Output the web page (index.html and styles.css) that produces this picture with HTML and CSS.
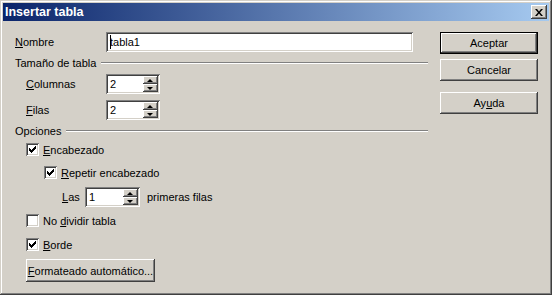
FILE: index.html
```html
<!DOCTYPE html>
<html lang="es">
<head>
    <meta charset="UTF-8">
    <title>Insertar tabla</title>
    <link rel="stylesheet" href="styles.css">
</head>
<body>
    <div class="window">
        <!-- Barra de título -->
        <div class="titlebar">
            <span class="title">Insertar tabla</span>
            <div class="close">
                <svg width="8" height="7" viewBox="0 0 8 7"><path d="M0 0h2l2 2.5L6 0h2L5 3.5 8 7H6L4 4.5 2 7H0l3-3.5z" fill="#000"/></svg>
            </div>
        </div>

        <div class="client">
            <div class="form">
                <div class="row">
                    <label class="lbl lbl-nombre"><u>N</u>ombre</label>
                    <div class="field field-nombre"><span class="caret"></span>tabla1</div>
                </div>

                <div class="section sec-tamano">
                    <span>Tamaño de tabla</span>
                    <div class="line"></div>
                </div>

                <div class="row indent sp-4">
                    <label class="lbl lbl-size"><u>C</u>olumnas</label>
                    <div class="field spin">
                        <span class="val">2</span>
                        <div class="spin-btns">
                            <div class="sbtn"><i class="up"></i></div>
                            <div class="sbtn"><i class="down"></i></div>
                        </div>
                    </div>
                </div>

                <div class="row indent sp-6">
                    <label class="lbl lbl-size"><u>F</u>ilas</label>
                    <div class="field spin">
                        <span class="val">2</span>
                        <div class="spin-btns">
                            <div class="sbtn"><i class="up"></i></div>
                            <div class="sbtn"><i class="down"></i></div>
                        </div>
                    </div>
                </div>

                <div class="section sec-opciones">
                    <span>Opciones</span>
                    <div class="line"></div>
                </div>

                <div class="check indent chk-enc">
                    <span class="box on"></span><span><u>E</u>ncabezado</span>
                </div>

                <div class="check chk-rep">
                    <span class="box on"></span><span><u>R</u>epetir encabezado</span>
                </div>

                <div class="row las">
                    <label class="lbl lbl-las"><u>L</u>as</label>
                    <div class="field spin spin-las">
                        <span class="val">1</span>
                        <div class="spin-btns">
                            <div class="sbtn"><i class="up"></i></div>
                            <div class="sbtn"><i class="down"></i></div>
                        </div>
                    </div>
                    <span class="after">primeras filas</span>
                </div>

                <div class="check indent chk-div">
                    <span class="box"></span><span>No <u>d</u>ividir tabla</span>
                </div>

                <div class="check indent chk-borde">
                    <span class="box on"></span><span><u>B</u>orde</span>
                </div>

                <div class="btn btn-auto"><span><u>F</u>ormateado automático...</span></div>
            </div>

            <div class="actions">
                <div class="btn default">Aceptar</div>
                <div class="btn btn-cancel">Cancelar</div>
                <div class="btn btn-help">Ay<u>u</u>da</div>
            </div>
        </div>
    </div>
</body>
</html>
```

FILE: styles.css
```css
body {
    margin: 0;
    font-family: 'Liberation Sans', Tahoma, sans-serif;
    font-size: 11px;
    color: #000;
    background: #d4d0c8;
}

.window {
    width: 552px;
    height: 295px;
    box-sizing: border-box;
    padding: 3px;
    background: #d4d0c8;
    box-shadow: inset -1px -1px #404040, inset 1px 1px #d4d0c8,
                inset -2px -2px #808080, inset 2px 2px #fff;
}

/* Barra de título */
.titlebar {
    height: 18px;
    display: flex;
    align-items: center;
    justify-content: space-between;
    padding: 0 2px;
    background: linear-gradient(to right, #0a246a, #a6caf0);
}

.title {
    color: #fff;
    font-weight: bold;
    font-size: 12.5px;
    margin-top: -1px;
}

.close {
    width: 16px;
    height: 14px;
    box-sizing: border-box;
    background: #d4d0c8;
    display: flex;
    align-items: center;
    justify-content: center;
    box-shadow: inset -1px -1px #404040, inset 1px 1px #fff,
                inset -2px -2px #808080, inset 2px 2px #d4d0c8;
}

.close svg {
    margin-left: -1px;
}

.client {
    display: flex;
    gap: 12px;
    padding: 11px 11px 0 12px;
}

.form {
    width: 413px;
}

.row {
    display: flex;
    align-items: center;
    height: 20px;
}

.indent {
    padding-left: 11px;
}

.sp-4 { margin-top: 4px; }
.sp-6 { margin-top: 6px; }

.lbl-nombre { width: 91px; }
.lbl-size { width: 80px; }
.lbl-las { width: 23px; }

/* Campos hundidos */
.field {
    height: 20px;
    box-sizing: border-box;
    background: #fff;
    padding: 2px 4px;
    display: flex;
    align-items: center;
    box-shadow: inset 1px 1px #808080, inset -1px -1px #fff,
                inset 2px 2px #404040, inset -2px -2px #d4d0c8;
}

.field-nombre {
    width: 307px;
}

.caret {
    display: inline-block;
    width: 1px;
    height: 14px;
    background: #000;
    margin-right: -1px;
}

.spin {
    width: 54px;
    padding-right: 2px;
}

.spin-las {
    width: 55px;
    height: 20px;
}

.spin .val {
    flex: 1;
}

.spin-btns {
    width: 15px;
    height: 16px;
    display: flex;
    flex-direction: column;
}

.sbtn {
    height: 8px;
    background: #d4d0c8;
    display: flex;
    align-items: center;
    justify-content: center;
    box-shadow: inset -1px -1px #404040, inset 1px 1px #fff,
                inset -2px -2px #808080;
}

.sbtn i {
    width: 0;
    height: 0;
    border-left: 3px solid transparent;
    border-right: 3px solid transparent;
    margin-left: -1px;
}

.sbtn .up { border-bottom: 3px solid #000; }
.sbtn .down { border-top: 3px solid #000; }

/* Secciones */
.section {
    display: flex;
    align-items: center;
    height: 14px;
    margin-top: 4px;
}

.section .line {
    flex: 1;
    margin-left: 5px;
    border-top: 1px solid #808080;
    border-bottom: 1px solid #fff;
    margin-top: 0;
}

/* Casillas */
.check {
    display: flex;
    align-items: center;
    gap: 4px;
    height: 13px;
}

.box {
    width: 13px;
    height: 13px;
    box-sizing: border-box;
    background: #fff;
    box-shadow: inset 1px 1px #808080, inset -1px -1px #fff,
                inset 2px 2px #404040, inset -2px -2px #d4d0c8;
}

.box.on {
    background: #fff url("data:image/svg+xml,%3Csvg xmlns='http://www.w3.org/2000/svg' width='13' height='13'%3E%3Cpath d='M3 5h1v1h1v1h1V6h1V5h1V4h1V3h1v3H9v1H8v1H7v1H6v1H5V9H4V8H3z' fill='%23000'/%3E%3C/svg%3E") no-repeat;
}

.chk-enc { margin-top: 5px; }
.chk-rep { margin-top: 10px; padding-left: 29px; }
.las { margin-top: 8px; padding-left: 47px; }
.las .after { margin-left: 7px; }
.chk-div { margin-top: 7px; }
.chk-borde { margin-top: 11px; }

/* Botones */
.btn {
    height: 22px;
    box-sizing: border-box;
    display: flex;
    align-items: center;
    justify-content: center;
    background: #d4d0c8;
    box-shadow: inset -1px -1px #404040, inset 1px 1px #fff,
                inset -2px -2px #808080, inset 2px 2px #d4d0c8;
}

.btn.default {
    border: 1px solid #000;
}

.btn-auto {
    width: 129px;
    height: 23px;
    margin: 8px 0 0 11px;
    white-space: nowrap;
}

.actions {
    width: 98px;
}

.btn-cancel { margin-top: 5px; }
.btn-help { margin-top: 11px; }
```
